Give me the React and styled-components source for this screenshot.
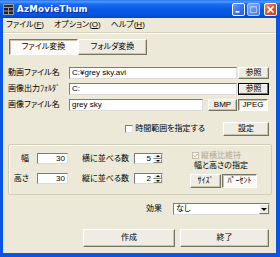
import React from "react";
import styled, { createGlobalStyle, css } from "styled-components";

const Global = createGlobalStyle`
  html, body { margin: 0; padding: 0; background: #fff; }
  * { box-sizing: border-box; }
`;

const Window = styled.div`
  width: 280px;
  height: 257px;
  display: flex;
  flex-direction: column;
  overflow: hidden;
  font-family: "Liberation Sans", "Noto Sans CJK JP", sans-serif;
  font-size: 8px;
  line-height: 1;
  font-feature-settings: "palt";
  color: #000;
`;

const TitleBar = styled.div`
  height: 18px;
  flex: none;
  display: flex;
  align-items: center;
  padding: 0 3px;
  background: linear-gradient(
    to bottom,
    #2a74f0 0%,
    #4f9bff 10%,
    #1a6cf2 22%,
    #0a5ae6 50%,
    #0655e0 80%,
    #0047c6 100%
  );
`;

const AppIcon = styled.svg`
  width: 11px;
  height: 11px;
  flex: none;
`;

const Title = styled.div`
  flex: 1;
  margin-left: 3px;
  color: #fff;
  font-family: "DejaVu Sans", "Liberation Sans", sans-serif;
  font-weight: bold;
  font-size: 8.6px;
  letter-spacing: 0.3px;
  text-shadow: 1px 1px #0a2a8a;
`;

const CaptionButton = styled.div`
  width: 13px;
  height: 13px;
  flex: none;
  border: 1px solid ${(p) => (p.$disabled ? "#b9cdf5" : "#fff")};
  border-radius: 2px;
  margin-left: ${(p) => p.$ml || 0}px;
  margin-top: 1px;
  display: flex;
  align-items: center;
  justify-content: center;
  background: ${(p) =>
    p.$kind === "close"
      ? "linear-gradient(135deg, #f0906c 0%, #e05a30 45%, #c8401a 100%)"
      : p.$disabled
      ? "linear-gradient(135deg, #7fa8f5 0%, #5a8cf0 60%, #4c7fe6 100%)"
      : "linear-gradient(135deg, #6ea0ff 0%, #3a74ee 50%, #2558d8 100%)"};
`;

const Frame = styled.div`
  flex: 1;
  display: flex;
  flex-direction: column;
  background: #ece9d8;
  border-style: solid;
  border-color: #0a55e4;
  border-width: 0 4px 4px 3px;
`;

const MenuBar = styled.div`
  height: 15px;
  flex: none;
  display: flex;
  align-items: center;
  gap: 10px;
  padding: 0 0 1px 3px;
  border-bottom: 1px solid #d6d2bf;
  box-shadow: 0 1px #fff;
`;

const MenuItem = styled.span`
  white-space: nowrap;
`;

const Content = styled.div`
  flex: 1;
  display: flex;
  flex-direction: column;
  padding: 6px 4px 0 5px;
`;

const raised = css`
  background: #efede3;
  border: 1px solid;
  border-color: #fff #77745f #77745f #fff;
  box-shadow: inset -1px -1px #c7c3ae;
`;

const sunken = css`
  background: #fbfaf5;
  border: 1px solid;
  border-color: #77745f #fff #fff #77745f;
  box-shadow: inset 1px 1px #c7c3ae;
`;

const focused = css`
  background: #efede3;
  border: 1px solid #000;
  box-shadow: inset -1px -1px #77745f, inset 1px 1px #fff;
`;

const Btn = styled.div`
  flex: none;
  width: ${(p) => p.$w}px;
  height: ${(p) => p.$h || 12}px;
  margin-left: ${(p) => p.$ml || 0}px;
  display: flex;
  align-items: center;
  justify-content: center;
  white-space: nowrap;
  ${(p) =>
    p.$state === "pressed" ? sunken : p.$state === "focus" ? focused : raised}
`;

const TabRow = styled.div`
  display: flex;
  margin-left: 1px;
`;

const FormRow = styled.div`
  height: 12px;
  flex: none;
  display: flex;
  align-items: center;
  margin-top: ${(p) => p.$mt}px;
  padding-right: 3px;
`;

const RowLabel = styled.div`
  width: 61px;
  flex: none;
  white-space: nowrap;
`;

const Field = styled.div`
  height: 100%;
  flex: ${(p) => (p.$w ? "none" : "1")};
  width: ${(p) => (p.$w ? `${p.$w}px` : "auto")};
  background: #fff;
  border: 1px solid;
  border-color: #7c7c7c #dcdcdc #dcdcdc #7c7c7c;
  display: flex;
  align-items: center;
  justify-content: ${(p) => (p.$right ? "flex-end" : "flex-start")};
  padding: 0 ${(p) => (p.$right ? 2 : 1)}px 0 2px;
  white-space: nowrap;
  overflow: hidden;
`;

const CheckRow = styled.div`
  height: 14px;
  flex: none;
  margin-top: 11px;
  display: flex;
  align-items: center;
  justify-content: flex-end;
  padding-right: 3px;
`;

const Checkbox = styled.div`
  width: 8px;
  height: 8px;
  flex: none;
  background: #fff;
  border: 1px solid;
  border-color: #7c7c7c #e0e0e0 #e0e0e0 #7c7c7c;
`;

const CheckLabel = styled.span`
  margin: 0 18px 0 2px;
  white-space: nowrap;
`;

const Group = styled.div`
  height: 51px;
  flex: none;
  margin-top: 8px;
  border: 1px solid #d0cdb8;
  border-radius: 2px;
  box-shadow: inset 1px 1px #fbfaf4;
  display: flex;
  align-items: flex-start;
`;

const SizeGrid = styled.div`
  display: grid;
  grid-template-columns: 28px 31px 66px 29px;
  grid-auto-rows: 11px;
  row-gap: 9px;
  padding-top: 8px;
`;

const GridLabel = styled.div`
  display: flex;
  align-items: center;
  white-space: nowrap;
  justify-content: ${(p) => (p.$right ? "flex-end" : "flex-start")};
  padding: ${(p) => (p.$right ? "0 8px 0 0" : "0 0 0 14px")};
`;

const SpinField = styled(Field)`
  padding: 0;
`;

const SpinValue = styled.span`
  flex: 1;
  text-align: right;
  padding-right: 2px;
`;

const SpinCol = styled.div`
  width: 9px;
  height: 100%;
  display: flex;
  flex-direction: column;
`;

const SpinHalf = styled.div`
  flex: 1;
  display: flex;
  align-items: center;
  justify-content: center;
  background: #efede3;
  border: 1px solid;
  border-color: #fff #8a8772 #8a8772 #fff;
  &::after {
    content: "";
    border-left: 2px solid transparent;
    border-right: 2px solid transparent;
    ${(p) =>
      p.$up
        ? "border-bottom: 2px solid #000;"
        : "border-top: 2px solid #000;"}
  }
`;

const RightCol = styled.div`
  margin-left: 27px;
  padding-top: 6px;
  display: flex;
  flex-direction: column;
`;

const AspectRow = styled.div`
  height: 9px;
  display: flex;
  align-items: center;
  padding-left: 2px;
  color: #aca899;
  white-space: nowrap;
`;

const DisabledBox = styled.svg`
  width: 7px;
  height: 7px;
  flex: none;
  margin-right: 2px;
`;

const GroupCaption = styled.div`
  height: 12px;
  display: flex;
  align-items: center;
  padding-left: 4px;
  white-space: nowrap;
`;

const ToggleRow = styled.div`
  display: flex;
  margin-top: 2px;
`;

const EffectRow = styled.div`
  height: 12px;
  flex: none;
  margin-top: 8px;
  display: flex;
  align-items: center;
  justify-content: flex-end;
  padding-right: 2px;
`;

const EffectLabel = styled.span`
  margin-right: 11px;
`;

const SelectField = styled(Field)`
  padding-right: 0;
  justify-content: space-between;
`;

const DropButton = styled.div`
  width: 10px;
  height: 100%;
  flex: none;
  display: flex;
  align-items: center;
  justify-content: center;
  background: #efede3;
  border: 1px solid;
  border-color: #fff #77745f #77745f #fff;
  &::after {
    content: "";
    border-left: 3px solid transparent;
    border-right: 3px solid transparent;
    border-top: 3px solid #000;
  }
`;

const BottomRow = styled.div`
  height: 18px;
  flex: none;
  margin-top: 14px;
  display: flex;
  justify-content: flex-end;
  gap: 5px;
  padding-right: 3px;
`;

function MenuLabel({ text, k }) {
  return (
    <MenuItem>
      {text}(<u>{k}</u>)
    </MenuItem>
  );
}

export default function App() {
  return (
    <>
      <Global />
      <Window>
        <TitleBar>
          <AppIcon viewBox="0 0 11 11">
            <rect x="0" y="0" width="11" height="11" fill="#9a9a9a" />
            <rect x="1" y="1" width="9" height="2" fill="#303030" />
            <rect x="1" y="4" width="4" height="2.5" fill="#202020" />
            <rect x="6" y="4" width="4" height="2.5" fill="#202020" />
            <rect x="1" y="7.5" width="4" height="2.5" fill="#202020" />
            <rect x="6" y="7.5" width="4" height="2.5" fill="#202020" />
          </AppIcon>
          <Title>AzMovieThum</Title>
          <CaptionButton>
            <svg width="11" height="11" viewBox="0 0 11 11">
              <rect x="2.5" y="7" width="4" height="1.6" fill="#fff" />
            </svg>
          </CaptionButton>
          <CaptionButton $ml={2} $disabled>
            <svg width="11" height="11" viewBox="0 0 11 11">
              <rect
                x="2.5"
                y="2.5"
                width="6"
                height="6"
                fill="none"
                stroke="#a9c3f3"
                strokeWidth="1"
              />
              <rect x="2" y="2" width="7" height="1.5" fill="#a9c3f3" />
            </svg>
          </CaptionButton>
          <CaptionButton $ml={4} $kind="close">
            <svg width="11" height="11" viewBox="0 0 11 11">
              <path
                d="M3 3 L8 8 M8 3 L3 8"
                stroke="#fff"
                strokeWidth="1.6"
                strokeLinecap="square"
              />
            </svg>
          </CaptionButton>
        </TitleBar>
        <Frame>
          <MenuBar>
            <MenuLabel text="ファイル" k="F" />
            <MenuLabel text="オプション" k="O" />
            <MenuLabel text="ヘルプ" k="H" />
          </MenuBar>
          <Content>
            <TabRow>
              <Btn $w={69} $h={16} $state="pressed">
                ファイル変換
              </Btn>
              <Btn $w={69} $h={16}>
                フォルダ変換
              </Btn>
            </TabRow>

            <FormRow $mt={12}>
              <RowLabel>動画ファイル名</RowLabel>
              <Field>C:¥grey sky.avi</Field>
              <Btn $w={31} $ml={1}>
                参照
              </Btn>
            </FormRow>
            <FormRow $mt={4}>
              <RowLabel>画像出力ﾌｫﾙﾀﾞ</RowLabel>
              <Field>C:</Field>
              <Btn $w={31} $ml={1} $state="focus">
                参照
              </Btn>
            </FormRow>
            <FormRow $mt={4}>
              <RowLabel>画像ファイル名</RowLabel>
              <Field $w={134}>grey sky</Field>
              <Btn $w={29} $ml={5}>
                BMP
              </Btn>
              <Btn $w={30} $ml={1} $state="pressed">
                JPEG
              </Btn>
            </FormRow>

            <CheckRow>
              <Checkbox />
              <CheckLabel>時間範囲を指定する</CheckLabel>
              <Btn $w={46} $h={14}>
                設定
              </Btn>
            </CheckRow>

            <Group>
              <SizeGrid>
                <GridLabel $right>幅</GridLabel>
                <Field $right>30</Field>
                <GridLabel>横に並べる数</GridLabel>
                <SpinField>
                  <SpinValue>5</SpinValue>
                  <SpinCol>
                    <SpinHalf $up />
                    <SpinHalf />
                  </SpinCol>
                </SpinField>
                <GridLabel $right>高さ</GridLabel>
                <Field $right>30</Field>
                <GridLabel>縦に並べる数</GridLabel>
                <SpinField>
                  <SpinValue>2</SpinValue>
                  <SpinCol>
                    <SpinHalf $up />
                    <SpinHalf />
                  </SpinCol>
                </SpinField>
              </SizeGrid>
              <RightCol>
                <AspectRow>
                  <DisabledBox viewBox="0 0 7 7">
                    <rect
                      x="0.5"
                      y="0.5"
                      width="6"
                      height="6"
                      fill="#f4f3ee"
                      stroke="#c2bea9"
                    />
                    <path
                      d="M1.6 3.4 L3 4.8 L5.5 2"
                      fill="none"
                      stroke="#aca899"
                      strokeWidth="1"
                    />
                  </DisabledBox>
                  縦横比維持
                </AspectRow>
                <GroupCaption>幅と高さの指定</GroupCaption>
                <ToggleRow>
                  <Btn $w={31} $h={14}>
                    ｻｲｽﾞ
                  </Btn>
                  <Btn $w={35} $h={14} $ml={1} $state="pressed">
                    ﾊﾟｰｾﾝﾄ
                  </Btn>
                </ToggleRow>
              </RightCol>
            </Group>

            <EffectRow>
              <EffectLabel>効果</EffectLabel>
              <SelectField $w={97}>
                <span>なし</span>
                <DropButton />
              </SelectField>
            </EffectRow>

            <BottomRow>
              <Btn $w={92} $h={18}>
                作成
              </Btn>
              <Btn $w={89} $h={18}>
                終了
              </Btn>
            </BottomRow>
          </Content>
        </Frame>
      </Window>
    </>
  );
}
